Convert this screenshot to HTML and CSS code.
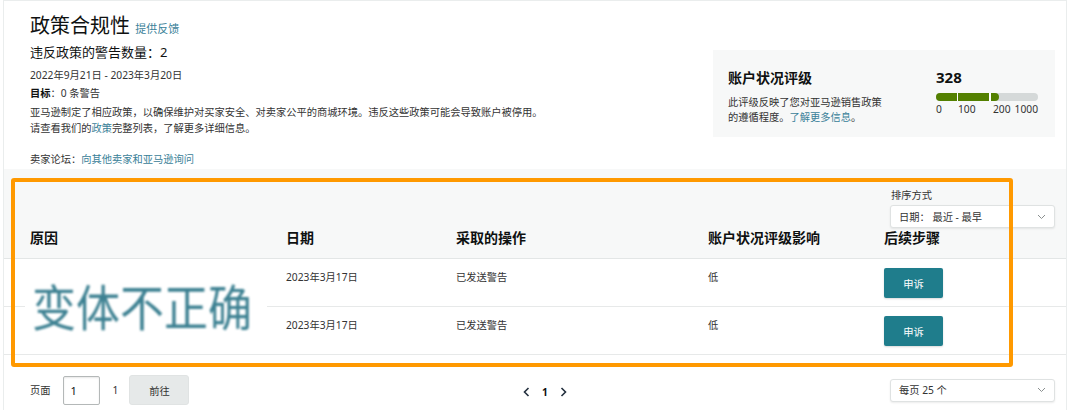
FILE: index.html
```html
<!DOCTYPE html>
<html lang="zh-CN">
<head>
    <meta charset="UTF-8">
    <meta name="viewport" content="width=device-width, initial-scale=1.0">
    <title>政策合规性</title>
    <link rel="stylesheet" href="styles.css">
</head>
<body>
    <div class="page">
        <!-- Summary -->
        <div class="summary">
            <div class="intro">
                <h1>政策合规性 <a href="#">提供反馈</a></h1>
                <p class="count">违反政策的警告数量：2</p>
                <p class="period">2022年9月21日 - 2023年3月20日</p>
                <p class="goal"><b>目标</b>：0 条警告</p>
                <p class="policy-note">亚马逊制定了相应政策，以确保维护对买家安全、对卖家公平的商城环境。违反这些政策可能会导致账户被停用。<br>请查看我们的<a href="#">政策</a>完整列表，了解更多详细信息。</p>
                <p class="forum">卖家论坛：<a href="#">向其他卖家和亚马逊询问</a></p>
            </div>

            <div class="rating-card">
                <div class="rating-text">
                    <h2>账户状况评级</h2>
                    <p><span>此评级反映了您对亚马逊销售政策</span><br><span>的遵循程度。</span><a href="#">了解更多信息</a><span>。</span></p>
                </div>
                <div class="rating-score">
                    <div class="score">328</div>
                    <div class="bar">
                        <span class="seg seg-1"></span>
                        <span class="seg seg-2"></span>
                        <span class="seg seg-3"></span>
                    </div>
                    <div class="bar-labels">
                        <span class="lbl-1">0</span>
                        <span class="lbl-2">100</span>
                        <span>200</span>
                        <span class="lbl-end">1000</span>
                    </div>
                </div>
            </div>
        </div>

        <!-- Warnings table -->
        <div class="table-head">
            <div>原因</div>
            <div>日期</div>
            <div>采取的操作</div>
            <div>账户状况评级影响</div>
            <div class="sort-cell">
                <label class="sort-label">排序方式</label>
                <div class="select sort-select">
                    <span>日期：&nbsp;最近 - 最早</span>
                    <svg width="9" height="6" viewBox="0 0 9 6"><polyline points="1,1 4.5,4.5 8,1" fill="none" stroke="#8a8f8f" stroke-width="1"/></svg>
                </div>
                <div>后续步骤</div>
            </div>
        </div>

        <div class="table-body">
            <div class="table-row">
                <div></div>
                <div class="cell">2023年3月17日</div>
                <div class="cell">已发送警告</div>
                <div class="cell">低</div>
                <div><button class="appeal">申诉</button></div>
            </div>
            <div class="table-row">
                <div></div>
                <div class="cell">2023年3月17日</div>
                <div class="cell">已发送警告</div>
                <div class="cell">低</div>
                <div><button class="appeal">申诉</button></div>
            </div>
            <div class="reason-image"><span>变体不正确</span></div>
        </div>

        <!-- Pagination -->
        <div class="pager">
            <div class="goto">
                <span>页面</span>
                <input class="page-input" type="text" value="1">
                <span class="total">1</span>
                <button class="goto-btn">前往</button>
            </div>
            <div class="pages">
                <svg width="7" height="10" viewBox="0 0 7 10"><polyline points="5.5,1 1.5,5 5.5,9" fill="none" stroke="#232f3e" stroke-width="1.6"/></svg>
                <span class="current">1</span>
                <svg width="7" height="10" viewBox="0 0 7 10"><polyline points="1.5,1 5.5,5 1.5,9" fill="none" stroke="#232f3e" stroke-width="1.6"/></svg>
            </div>
            <div class="select per-page">
                <span>每页 25 个</span>
                <svg width="9" height="6" viewBox="0 0 9 6"><polyline points="1,1 4.5,4.5 8,1" fill="none" stroke="#8a8f8f" stroke-width="1"/></svg>
            </div>
        </div>

        <div class="highlight"></div>
    </div>
</body>
</html>
```

FILE: styles.css
```css
* {
    margin: 0;
    padding: 0;
    box-sizing: border-box;
}

body {
    font-family: "Noto Sans", "Noto Sans CJK SC", sans-serif;
    font-size: 10.25px;
    line-height: 16px;
    color: #333;
    background: #fff;
}

a {
    color: #3a8198;
    text-decoration: none;
}

.page {
    position: relative;
    margin-left: 3px;
    width: 1064px;
    height: 410px;
    border: 1px solid #eaeded;
    border-bottom: none;
    overflow: hidden;
}

/* Summary */
.summary {
    display: flex;
    justify-content: space-between;
    align-items: flex-start;
    height: 168px;
    padding: 12px 11px 0 26px;
}

.intro h1 {
    font-size: 20px;
    font-weight: 400;
    line-height: 26px;
    color: #0f1111;
}

.intro h1 a {
    font-size: 11px;
    line-height: 1;
}

.count {
    margin-top: 3px;
    font-size: 13px;
    line-height: 20px;
    color: #0f1111;
}

.period {
    margin-top: 5px;
}

.goal {
    margin-top: 2px;
}

.goal b {
    color: #0f1111;
}

.policy-note {
    margin-top: 3px;
}

.forum {
    margin-top: 15px;
}

/* Account health card */
.rating-card {
    display: flex;
    justify-content: space-between;
    width: 342px;
    height: 87px;
    margin-top: 37px;
    padding: 17px 17px 0 15px;
    background: #f7f8f8;
}

.rating-text h2 {
    font-size: 14px;
    line-height: 22px;
    font-weight: 700;
    color: #0f1111;
}

.rating-text p {
    margin-top: 6px;
    line-height: 15px;
}

.rating-score {
    width: 102px;
}

.score {
    font-size: 15px;
    font-weight: 700;
    line-height: 20px;
    color: #0f1111;
}

.bar {
    display: flex;
    height: 8px;
    margin-top: 6px;
    border-radius: 4px;
    background: #d5d9d9;
    overflow: hidden;
}

.seg {
    background: #538000;
}

.seg-1 {
    width: 22px;
    border-right: 1px solid #fff;
}

.seg-2 {
    width: 33px;
    border-right: 2px solid #fff;
}

.seg-3 {
    width: 8px;
    border-radius: 0 4px 4px 0;
}

.bar-labels {
    display: flex;
    margin-top: 1px;
    line-height: 14px;
    color: #333;
}

.lbl-1 {
    width: 22px;
}

.lbl-2 {
    width: 35px;
}

.lbl-end {
    margin-left: auto;
}

/* Table */
.table-head,
.table-row {
    display: grid;
    grid-template-columns: 256px 170px 252px 176px 1fr;
    padding-left: 26px;
}

.table-head {
    height: 90px;
    align-items: end;
    padding-bottom: 11px;
    background: #f7f8f8;
    border-bottom: 1px solid #e3e6e6;
    font-size: 14px;
    font-weight: 700;
    line-height: 18px;
    color: #0f1111;
}

.sort-cell {
    display: flex;
    flex-direction: column;
}

.sort-label {
    margin-left: 7px;
    font-size: 10.25px;
    font-weight: 400;
    line-height: 15px;
    color: #333;
}

.sort-select {
    margin: 2px 0 1px 6px;
    font-weight: 400;
}

.select {
    display: flex;
    align-items: center;
    justify-content: space-between;
    width: 165px;
    height: 23px;
    padding: 0 8px;
    background: #fff;
    border: 1px solid #dfe2e2;
    border-radius: 3px;
    box-shadow: 0 1px 2px rgba(15, 17, 17, 0.08);
    font-size: 10.25px;
    color: #333;
}

.table-body {
    position: relative;
}

.table-row {
    height: 48px;
    padding-top: 9px;
    align-items: start;
    border-bottom: 1px solid #e7e9e9;
}

.cell {
    padding-top: 2px;
    line-height: 14px;
}

.appeal {
    width: 59px;
    height: 30px;
    border: none;
    border-radius: 2px;
    background: #1f7d8c;
    color: #fff;
    font-family: inherit;
    font-size: 10.25px;
    box-shadow: 0 1px 2px rgba(0, 0, 0, 0.15);
}

/* pasted reason label, sits over the first column */
.reason-image {
    position: absolute;
    left: 21px;
    top: 9px;
    width: 242px;
    height: 74px;
    padding: 2px 0 0 7px;
    background: #fff;
}

.reason-image span {
    display: inline-block;
    font-family: "Noto Sans CJK SC", sans-serif;
    font-size: 44px;
    line-height: 70px;
    color: #3d8192;
    transform: scaleY(1.12);
    filter: blur(1.1px);
}

/* Pagination */
.pager {
    display: grid;
    grid-template-columns: 493px auto 1fr;
    align-items: center;
    padding: 20px 11px 0 26px;
}

.goto {
    display: flex;
    align-items: center;
}

.page-input {
    width: 37px;
    height: 29px;
    margin-left: 12px;
    padding-left: 7px;
    border: 1px solid #b4b8b8;
    border-radius: 2px;
    font-family: inherit;
    font-size: 11px;
    color: #0f1111;
    box-shadow: inset 0 1px 2px rgba(15, 17, 17, 0.1);
}

.total {
    margin-left: 13px;
}

.goto-btn {
    width: 60px;
    height: 30px;
    margin-left: 11px;
    border: 1px solid #e0e3e3;
    border-radius: 3px;
    background: #e6e9e9;
    font-family: inherit;
    font-size: 10.25px;
    color: #333;
}

.pages {
    display: flex;
    align-items: center;
    gap: 12px;
    padding-top: 4px;
    font-weight: 700;
    color: #0f1111;
}

.per-page {
    justify-self: end;
}

/* orange callout frame over the warnings table */
.highlight {
    position: absolute;
    left: 7px;
    top: 177px;
    width: 1002px;
    height: 189px;
    border: 4px solid #ff9900;
    border-radius: 3px;
}
```
